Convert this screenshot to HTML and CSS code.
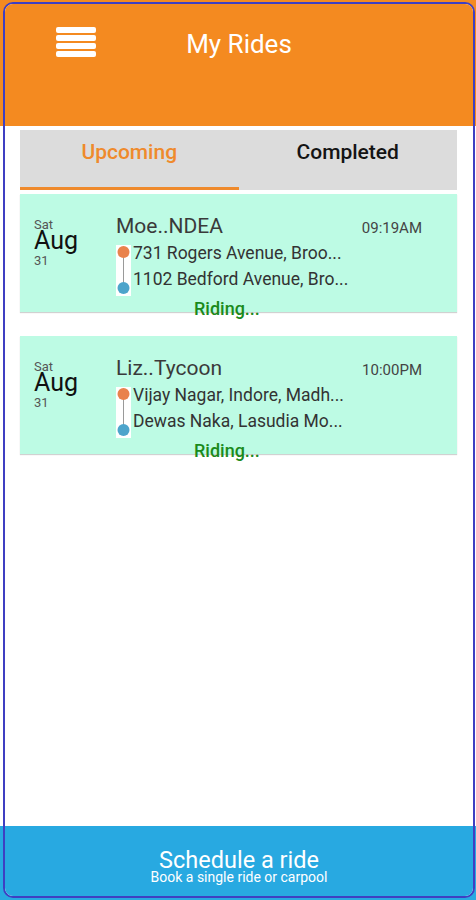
FILE: index.html
```html
<!DOCTYPE html>
<html lang="en">
<head>
    <meta charset="UTF-8">
    <meta name="viewport" content="width=device-width, initial-scale=1.0">
    <title>My Rides</title>
    <link rel="stylesheet" href="styles.css">
</head>
<body>
    <div class="phone">
        <div class="header">
            <svg class="menu" width="40" height="30" viewBox="0 0 40 30">
                <rect x="0" y="0" width="40" height="6" rx="2" fill="#fff"/>
                <rect x="0" y="8" width="40" height="6" rx="2" fill="#fff"/>
                <rect x="0" y="16" width="40" height="6" rx="2" fill="#fff"/>
                <rect x="0" y="24" width="40" height="6" rx="2" fill="#fff"/>
            </svg>
            <h1 class="title">My Rides</h1>
        </div>

        <div class="content">
            <div class="tabs">
                <div class="tab active">Upcoming</div>
                <div class="tab">Completed</div>
            </div>

            <div class="ride">
                <div class="date">
                    <div class="day">Sat</div>
                    <div class="month">Aug</div>
                    <div class="num">31</div>
                </div>
                <div class="info">
                    <div class="top-row">
                        <span class="name">Moe..NDEA</span>
                        <span class="time">09:19AM</span>
                    </div>
                    <div class="route">
                        <svg class="route-icon" width="15" height="51" viewBox="0 0 15 51">
                            <rect x="0" y="0" width="15" height="51" fill="#fff"/>
                            <line x1="7.5" y1="12" x2="7.5" y2="38" stroke="#9a9a9a" stroke-width="1"/>
                            <circle cx="7.5" cy="7" r="6" fill="#e9824c"/>
                            <circle cx="7.5" cy="43" r="6" fill="#4da4cb"/>
                        </svg>
                        <div class="addresses">
                            <div class="addr">731 Rogers Avenue, Broo...</div>
                            <div class="addr">1102 Bedford Avenue, Bro...</div>
                        </div>
                    </div>
                    <div class="status">Riding...</div>
                </div>
            </div>

            <div class="ride">
                <div class="date">
                    <div class="day">Sat</div>
                    <div class="month">Aug</div>
                    <div class="num">31</div>
                </div>
                <div class="info">
                    <div class="top-row">
                        <span class="name">Liz..Tycoon</span>
                        <span class="time">10:00PM</span>
                    </div>
                    <div class="route">
                        <svg class="route-icon" width="15" height="51" viewBox="0 0 15 51">
                            <rect x="0" y="0" width="15" height="51" fill="#fff"/>
                            <line x1="7.5" y1="12" x2="7.5" y2="38" stroke="#9a9a9a" stroke-width="1"/>
                            <circle cx="7.5" cy="7" r="6" fill="#e9824c"/>
                            <circle cx="7.5" cy="43" r="6" fill="#4da4cb"/>
                        </svg>
                        <div class="addresses">
                            <div class="addr">Vijay Nagar, Indore, Madh...</div>
                            <div class="addr">Dewas Naka, Lasudia Mo...</div>
                        </div>
                    </div>
                    <div class="status">Riding...</div>
                </div>
            </div>
        </div>

        <div class="schedule">
            <div class="schedule-title">Schedule a ride</div>
            <div class="schedule-sub">Book a single ride or carpool</div>
        </div>
    </div>
</body>
</html>
```

FILE: styles.css
```css
html, body {
    margin: 0;
    height: 900px;
}

body {
    font-family: Roboto, "Liberation Sans", sans-serif;
    background: linear-gradient(#f48a20 0 126px, #fff 126px 826px, #28a9e1 826px);
}

.phone {
    box-sizing: border-box;
    height: 896px;
    margin: 2px 1px 2px 3px;
    border: 2px solid #3f3fc2;
    border-radius: 10px;
    overflow: hidden;
    background: #fff;
    display: flex;
    flex-direction: column;
}

/* header */
.header {
    height: 122px;
    box-sizing: border-box;
    padding-top: 23px;
    background: #f48a20;
    display: grid;
    grid-template-columns: 1fr auto 1fr;
    align-items: start;
}

.menu {
    display: block;
    margin-left: 51px;
}

.title {
    margin: 2px 0 0;
    font-size: 26px;
    line-height: 30px;
    font-weight: 400;
    color: #fff;
}

/* list */
.content {
    flex: 1;
    padding: 4px 16px 0 15px;
}

.tabs {
    display: flex;
    background: #dcdcdc;
}

.tab {
    flex: 1;
    height: 60px;
    box-sizing: border-box;
    padding-top: 10px;
    text-align: center;
    font-size: 21px;
    line-height: 24px;
    font-weight: 500;
    color: #141414;
    border-bottom: 3px solid transparent;
}

.tab.active {
    color: #ef8a2c;
    border-bottom-color: #ef8a2c;
}

.ride {
    height: 118px;
    box-sizing: border-box;
    margin-top: 4px;
    margin-bottom: 24px;
    padding: 20px 35px 0 14px;
    background: #bdfbe4;
    box-shadow: 0 1px 1px rgba(0, 0, 0, 0.18);
    display: flex;
}

.date {
    width: 82px;
    margin-top: 5.5px;
}

.day, .num {
    font-size: 13px;
    line-height: 10px;
    color: #555;
}

.month {
    margin-top: 2.5px;
    font-size: 25px;
    line-height: 18px;
    color: #111;
}

.num {
    margin-top: 5.5px;
}

.info {
    flex: 1;
}

.top-row {
    display: flex;
    justify-content: space-between;
    align-items: baseline;
}

.name {
    font-size: 21px;
    line-height: 24px;
    color: #3a3a3a;
}

.time {
    font-size: 15px;
    line-height: 24px;
    color: #444;
}

.route {
    display: flex;
    align-items: flex-start;
}

.route-icon {
    display: block;
    margin-top: 5px;
    margin-right: 2px;
}

.addr {
    font-size: 17.5px;
    line-height: 26px;
    color: #333;
    white-space: nowrap;
}

.status {
    margin: 3px 0 0 78px;
    font-size: 18px;
    line-height: 20px;
    font-weight: 500;
    color: #1b8a1b;
}

/* bottom bar */
.schedule {
    height: 70px;
    box-sizing: border-box;
    padding-top: 24px;
    background: #28a9e1;
    color: #fff;
    text-align: center;
}

.schedule-title {
    font-size: 23.5px;
    line-height: 20px;
}

.schedule-sub {
    margin-top: 1.5px;
    font-size: 14px;
    line-height: 11px;
}
```
